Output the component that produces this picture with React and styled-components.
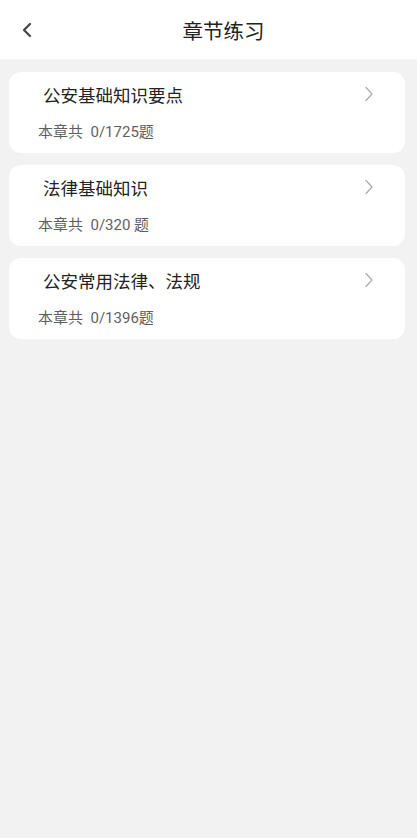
import React from 'react';
import styled, { createGlobalStyle } from 'styled-components';

const GlobalStyle = createGlobalStyle`
  html, body {
    margin: 0;
    padding: 0;
    background: #f2f2f2;
    font-family: Roboto, "Noto Sans CJK SC", sans-serif;
  }
`

const chapters = [
  { id: 1, name: '公安基础知识要点', done: 0, total: '1725' },
  { id: 2, name: '法律基础知识', done: 0, total: '320 ' },
  { id: 3, name: '公安常用法律、法规', done: 0, total: '1396' },
]

const Page = styled.div`
  min-height: 838px;
  background: #f2f2f2;
`

const Header = styled.div`
  height: 59px;
  background: #fff;
  display: flex;
  align-items: center;
`

const Back = styled.div`
  width: 30px;
  padding-left: 20px;
  display: flex;
  align-items: center;
`

const Title = styled.h1`
  flex: 1;
  margin: 0;
  padding-right: 40px;
  padding-left: 20px;
  text-align: center;
  font-size: 20.5px;
  font-weight: 400;
  color: #222;
`

const List = styled.div`
  display: flex;
  flex-direction: column;
  gap: 12px;
  padding: 13px 12px 0 9px;
`

const Card = styled.div`
  position: relative;
  height: 81px;
  background: #fff;
  border-radius: 12px;
  box-sizing: border-box;
  padding: 12px 0 0 29px;
`

const CardTitle = styled.div`
  padding-left: 5px;
  font-size: 17.5px;
  line-height: 24px;
  font-weight: 400;
  color: #222;
`

const Count = styled.div`
  margin-top: 14px;
  font-size: 15px;
  line-height: 21px;
  color: #5f5f5f;
`

const Arrow = styled.svg`
  position: absolute;
  right: 30px;
  top: 14px;
`

function App() {
  return (
    <Page>
      <GlobalStyle />
      <Header>
        <Back>
          <svg width="14" height="16" viewBox="0 0 14 16">
            <path d="M10 2 L4 8 L10 14" fill="none" stroke="#444" strokeWidth="2.2" strokeLinecap="round" strokeLinejoin="round" />
          </svg>
        </Back>
        <Title>章节练习</Title>
      </Header>
      <List>
        {chapters.map(ch => {
          return (
            <Card key={ch.id}>
              <CardTitle>{ch.name}</CardTitle>
              <Count>本章共&nbsp;&nbsp;{ch.done}/{ch.total}题</Count>
              <Arrow width="12" height="16" viewBox="0 0 12 16">
                <path d="M3 1.5 L9 8 L3 14.5" fill="none" stroke="#aaa" strokeWidth="1.2" strokeLinecap="round" strokeLinejoin="round" />
              </Arrow>
            </Card>
          )
        })}
      </List>
    </Page>
  )
}

export default App
